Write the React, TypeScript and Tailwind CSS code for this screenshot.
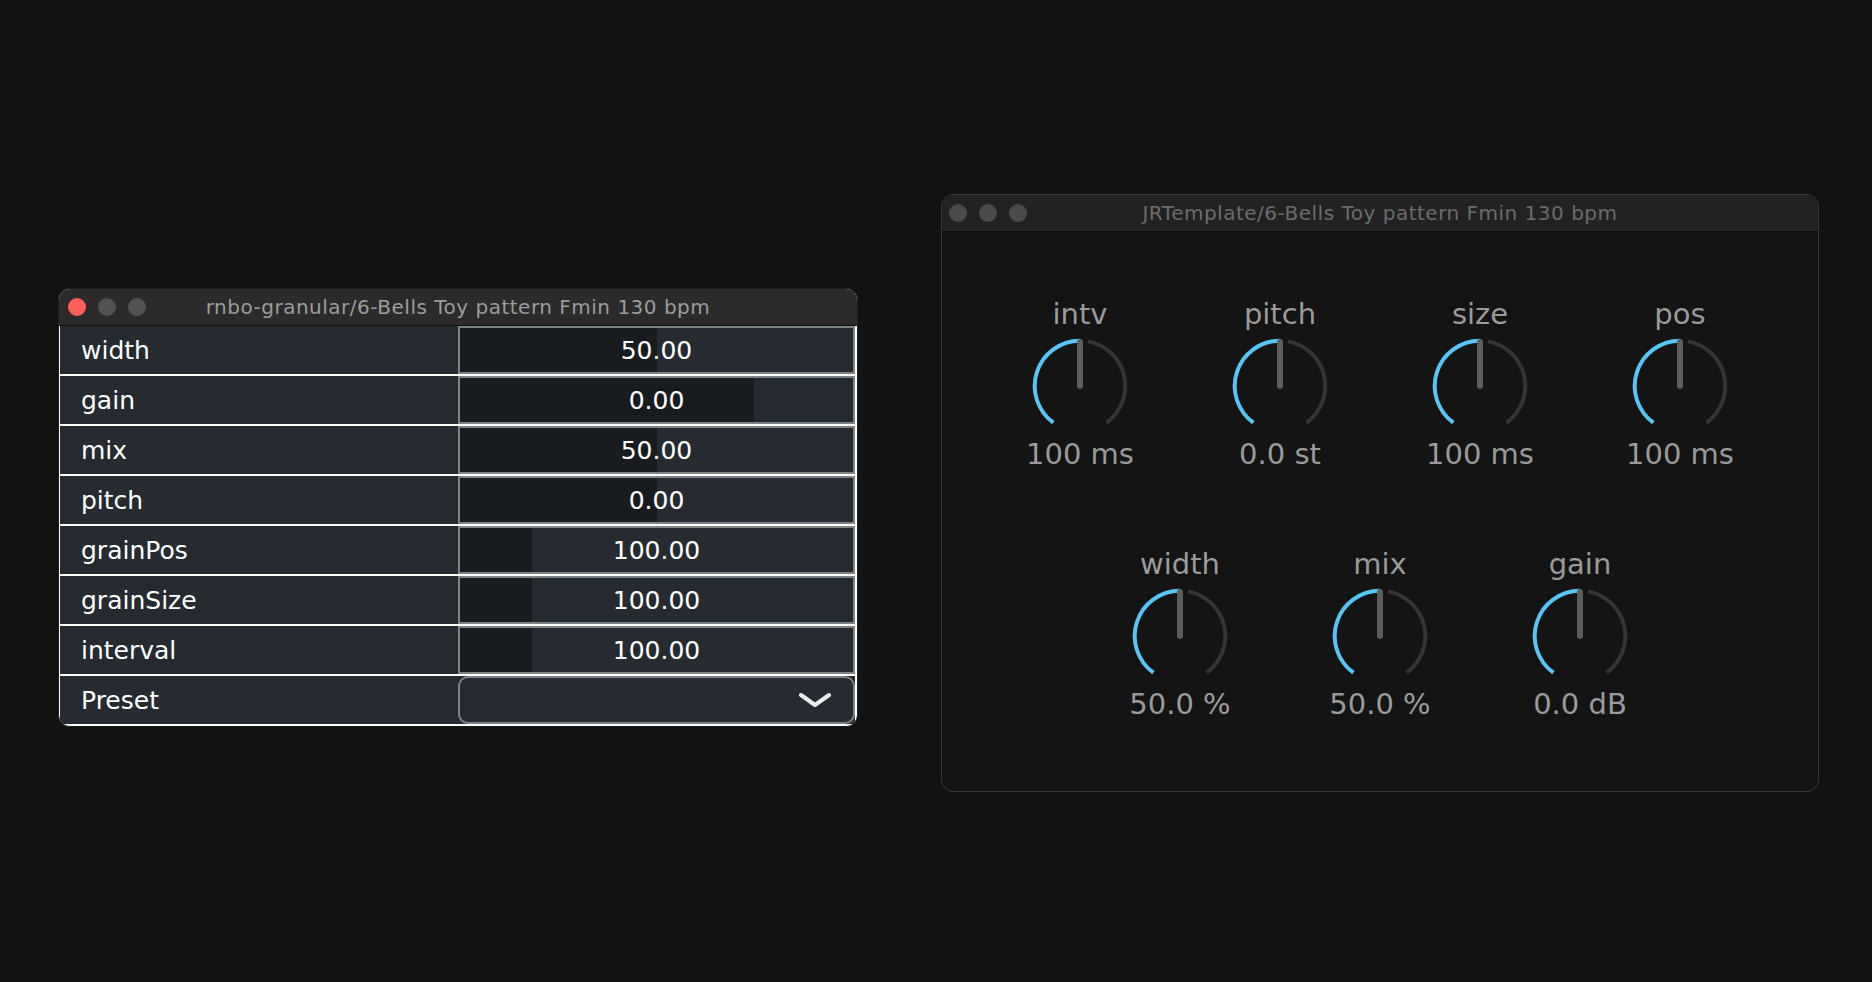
import React from "react";

const FONT = { fontFamily: '"DejaVu Sans", "Liberation Sans", sans-serif' };

type Param = { name: string; value: string; fill: number };

const params: Param[] = [
  { name: "width", value: "50.00", fill: 50 },
  { name: "gain", value: "0.00", fill: 74.7 },
  { name: "mix", value: "50.00", fill: 50 },
  { name: "pitch", value: "0.00", fill: 50 },
  { name: "grainPos", value: "100.00", fill: 18.2 },
  { name: "grainSize", value: "100.00", fill: 18.2 },
  { name: "interval", value: "100.00", fill: 18.2 },
];

function ParamRow({ p }: { p: Param }) {
  return (
    <div className="flex h-[48px]">
      <div className="flex w-[398px] items-center bg-[#252b31] pl-[21px] pt-[2px] text-[25px] text-white">
        {p.name}
      </div>
      <div className="relative flex flex-1 border-2 border-[#7b8587] bg-[#252b31]">
        <div className="h-full bg-[#191c1f]" style={{ width: `${p.fill}%` }} />
        <div className="absolute inset-0 flex items-center justify-center pt-[2px] text-[25px] text-white">
          {p.value}
        </div>
      </div>
    </div>
  );
}

function LeftWindow() {
  return (
    <div
      className="mt-[288px] flex w-[800px] flex-col overflow-hidden rounded-[12px] border border-[#1c1c1c] bg-white"
      style={FONT}
    >
      <div className="grid h-[37px] grid-cols-[1fr_auto_1fr] items-center border-b border-[#101010] bg-[#2b2b2b]">
        <div className="flex items-center gap-[12px] pl-[9px]">
          <div className="h-[18px] w-[18px] rounded-full bg-[#fe5f57]" />
          <div className="h-[18px] w-[18px] rounded-full bg-[#525252]" />
          <div className="h-[18px] w-[18px] rounded-full bg-[#525252]" />
        </div>
        <div className="text-[20px] tracking-[0.5px] text-[#9c9c9c]">
          rnbo-granular/6-Bells Toy pattern Fmin 130 bpm
        </div>
        <div />
      </div>
      <div className="flex flex-col gap-[2px] pb-[2px] pl-[1px] pr-[2px]">
        {params.map((p) => (
          <ParamRow key={p.name} p={p} />
        ))}
        <div className="flex h-[48px] bg-[#252b31]">
          <div className="flex w-[398px] items-center pl-[21px] pt-[2px] text-[25px] text-white">
            Preset
          </div>
          <div className="flex flex-1 items-center justify-end rounded-[10px] border-2 border-[#7b8587] bg-[#252b31] pr-[22px]">
            <svg width="32" height="16" viewBox="0 0 32 16">
              <path
                d="M2 3 L16 13 L30 3"
                fill="none"
                stroke="#ececec"
                strokeWidth="4"
                strokeLinecap="round"
                strokeLinejoin="round"
              />
            </svg>
          </div>
        </div>
      </div>
    </div>
  );
}

function pt(deg: number, r: number, cx: number, cy: number) {
  const a = (deg * Math.PI) / 180;
  return `${(cx + r * Math.sin(a)).toFixed(2)} ${(cy - r * Math.cos(a)).toFixed(2)}`;
}

function Knob({ label, value }: { label: string; value: string }) {
  const cx = 52;
  const cy = 54;
  const r = 45.3;
  const blue = `M ${pt(-144, r, cx, cy)} A ${r} ${r} 0 0 1 ${pt(0, r, cx, cy)}`;
  const grey = `M ${pt(10, r, cx, cy)} A ${r} ${r} 0 0 1 ${pt(144, r, cx, cy)}`;
  return (
    <div className="flex w-[200px] flex-col items-center">
      <div className="h-[36px] text-[29px] leading-[36px] text-[#9a9a9a]">{label}</div>
      <svg width="104" height="104" viewBox="0 0 104 104">
        <path d={grey} fill="none" stroke="#353535" strokeWidth="4" />
        <path d={blue} fill="none" stroke="#55c6f7" strokeWidth="4" />
        <rect x="49" y="7" width="6" height="50" rx="3" fill="#5c5c5c" />
      </svg>
      <div className="h-[36px] text-[29px] leading-[36px] text-[#9a9a9a]">{value}</div>
    </div>
  );
}

function RightWindow() {
  return (
    <div
      className="mt-[194px] flex h-[598px] w-[878px] flex-col overflow-hidden rounded-[12px] border border-[#3a3a3a] bg-[#141414]"
      style={FONT}
    >
      <div className="grid h-[37px] grid-cols-[1fr_auto_1fr] items-center border-b border-[#0b0b0b] bg-[#222222]">
        <div className="flex items-center gap-[12px] pl-[7px]">
          <div className="h-[18px] w-[18px] rounded-full bg-[#4a4a4a]" />
          <div className="h-[18px] w-[18px] rounded-full bg-[#4a4a4a]" />
          <div className="h-[18px] w-[18px] rounded-full bg-[#4a4a4a]" />
        </div>
        <div className="text-[20px] tracking-[0.5px] text-[#6c6c6c]">
          JRTemplate/6-Bells Toy pattern Fmin 130 bpm
        </div>
        <div />
      </div>
      <div className="flex flex-col items-center gap-[74px] pt-[64px]">
        <div className="flex">
          <Knob label="intv" value="100 ms" />
          <Knob label="pitch" value="0.0 st" />
          <Knob label="size" value="100 ms" />
          <Knob label="pos" value="100 ms" />
        </div>
        <div className="flex">
          <Knob label="width" value="50.0 %" />
          <Knob label="mix" value="50.0 %" />
          <Knob label="gain" value="0.0 dB" />
        </div>
      </div>
    </div>
  );
}

export default function App() {
  return (
    <div className="flex h-[982px] w-[1872px] items-start gap-[83px] bg-[#121212] pl-[58px]">
      <LeftWindow />
      <RightWindow />
    </div>
  );
}
